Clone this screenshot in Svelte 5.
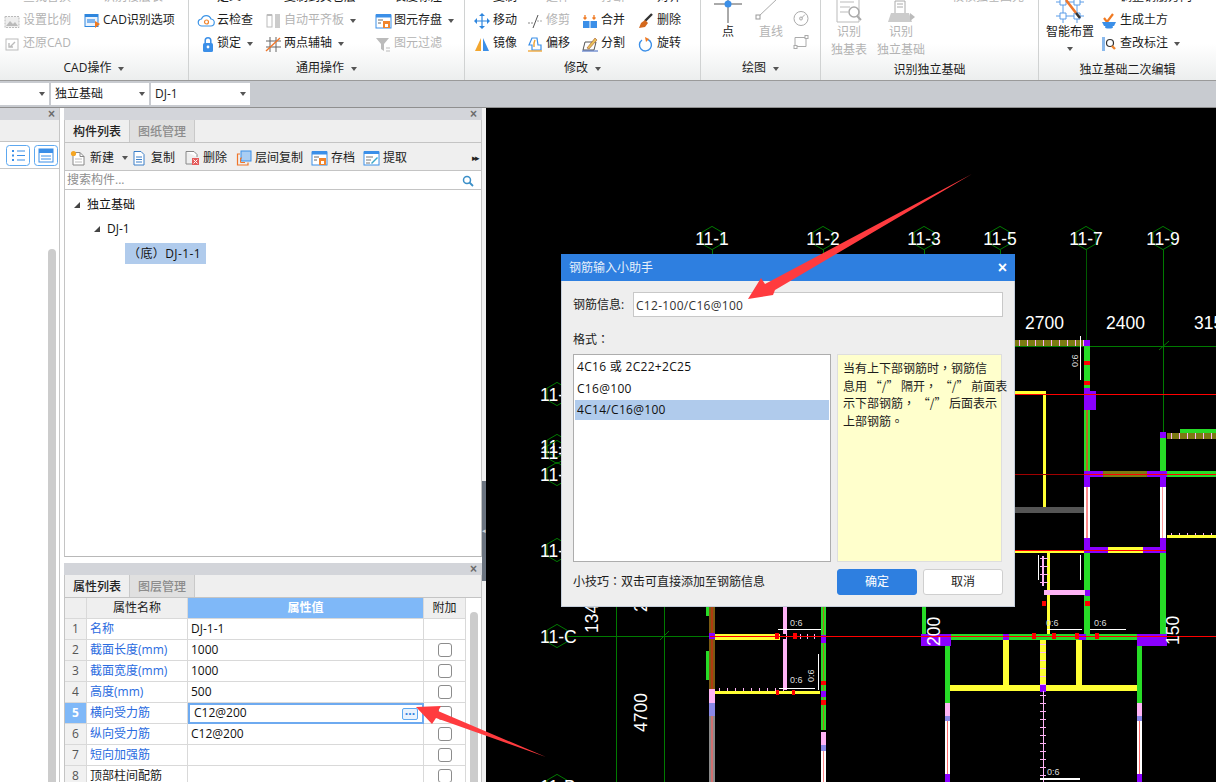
<script>
const icons = {
  scale: '<rect x="1" y="3.5" width="14" height="11" fill="#eee" stroke="#bbb" stroke-dasharray="2 1"/><path d="M2 13l4-5 3 3 2-2 3 4z" fill="#bbb"/>',
  cadopt: '<rect x="1" y="1.5" width="13" height="12" fill="#eaf3fd" stroke="#2e86de"/><rect x="1" y="1" width="13" height="3" fill="#2e86de"/><rect x="3" y="6" width="8" height="4" fill="#7db4ee"/><path d="M11 8l5 3-5 4z" fill="#f07a22"/>',
  restore: '<rect x="2" y="3" width="12" height="11" fill="none" stroke="#bbb"/><path d="M11 6L6 11M5 7v4h4" fill="none" stroke="#bbb" stroke-width="1.4"/>',
  cloud: '<path d="M4 13a3.5 3.5 0 0 1-.5-7A5 5 0 0 1 13 6a3.5 3.5 0 0 1-.5 7z" fill="#fff" stroke="#3b93e6" stroke-width="1.2"/><circle cx="8.5" cy="9" r="2" fill="none" stroke="#f0842c" stroke-width="1.2"/>',
  lock: '<rect x="5" y="7" width="10" height="9" rx="1.5" fill="#3b8fe8"/><path d="M7.200 7V4.500a2.800 2.800 0 0 1 5.600 0V7" fill="none" stroke="#3b8fe8" stroke-width="1.5"/><circle cx="10" cy="11" r="1.400" fill="#fff"/>',
  align: '<rect x="2" y="2" width="5" height="12" fill="none" stroke="#bbb"/><rect x="10" y="1" width="5" height="14" fill="#ccc"/><rect x="2" y="1" width="5" height="2" fill="#bbb"/>',
  axis: '<path d="M5 1v15M11 1v15M1 5h15M1 11h15" stroke="#666" fill="none"/><path d="M1 15L15 2" stroke="#f0762a" stroke-width="1.4"/>',
  save: '<rect x="1" y="2" width="15" height="13" fill="#fff" stroke="#3b8fe8"/><rect x="1" y="1" width="15" height="3.5" fill="#3b8fe8"/><path d="M3 7h5M3 10h3" stroke="#666"/><rect x="8" y="8" width="7" height="7" fill="#f0842c"/><rect x="10" y="11" width="3" height="3" fill="#fff"/>',
  filter: '<path d="M1 2h13L9 8v7l-3-2V8z" fill="#bbb"/><path d="M11 12h4M11 15h4" stroke="#bbb"/>',
  define: '<rect x="2" y="-4" width="12" height="10" fill="#fff" stroke="#888"/>',
  copylayer: '<rect x="2" y="-4" width="13" height="11" fill="#fff" stroke="#777"/>',
  len: '<path d="M8-4v10" stroke="#555"/>',
  rcopy: '<circle cx="8" cy="1" r="5" fill="none" stroke="#3b8fe8" stroke-width="1.5"/>',
  extend: '<path d="M2-3h12" stroke="#bbb"/><path d="M6 6L10-2" stroke="#bbb"/>',
  brk: '<rect x="1" y="-3" width="6" height="7" fill="#bbb"/><rect x="9" y="-3" width="6" height="7" fill="#bbb"/>',
  alignb: '<rect x="1" y="-4" width="14" height="9" fill="#5a9cec" stroke="#2e7fe0"/>',
  move: '<path d="M8 1v14M1 8h14" stroke="#2e86de" stroke-width="1.2"/><path d="M8 0l3 3H5zM8 16l3-3H5zM0 8l3-3v6zM16 8l-3-3v6z" fill="#2e86de"/>',
  trim: '<path d="M1 10h5" stroke="#888" stroke-dasharray="2 1"/><path d="M6 15L11 2" stroke="#555"/><path d="M10 8h5" stroke="#aaa" stroke-dasharray="2 1"/>',
  merge: '<rect x="1" y="8" width="14" height="7" fill="#3b8fe8"/><path d="M8 8v7" stroke="#fff"/><path d="M3 2v4M1.5 4.5L3 6l1.5-1.5M12 2v4M10.5 4.5L12 6l1.5-1.5" stroke="#f07a22" fill="none" stroke-width="1.3"/>',
  del: '<path d="M14 1L7 8" stroke="#333" stroke-width="2.4"/><path d="M7 7l3 3-3 4-6 1 2-5z" fill="#d4691e"/>',
  mirror: '<path d="M7 2v13H1z" fill="#f3a62e"/><path d="M9 2v13h6z" fill="#3b8fe8"/>',
  offset: '<path d="M5 14V9H2l3-7h5l1 7h3v5z" fill="none" stroke="#3b8fe8" stroke-width="1.2"/><path d="M7 11V7l1-3" fill="none" stroke="#f0a12c" stroke-width="1.4"/><path d="M1 15h14" stroke="#f0a12c" stroke-width="1.3"/>',
  split: '<path d="M1 14l2-8h11l-2 8z" fill="none" stroke="#555"/><path d="M5 12L13 2l2 2-8 9z" fill="#e8c25a" stroke="#a5562c" stroke-width=".6"/><path d="M0 15h16" stroke="#3b62c0"/>',
  rotate: '<path d="M10 3.5A6 6 0 1 1 4 4" fill="none" stroke="#3b8fe8" stroke-width="1.4"/><path d="M7 1l4 2-3 3z" fill="#f07a22"/>',
  adjust: '<path d="M2 3h12" stroke="#f07a22" stroke-width="1.5"/>',
  earth: '<path d="M3 5l3 4 6-8" fill="none" stroke="#f07a22" stroke-width="2.2"/><path d="M1 9h14l-2 4H3z" fill="#3b8fe8"/><ellipse cx="8" cy="14" rx="4" ry="1.5" fill="#3b8fe8"/>',
  mark: '<rect x="1" y="1" width="3" height="14" fill="#8ab9ec"/><circle cx="9" cy="7" r="3.5" fill="none" stroke="#333" stroke-width="1.2"/><path d="M11 10l3 3" stroke="#f0842c" stroke-width="2.4"/>',
  check: '<rect x="1" y="-4" width="12" height="9" fill="none" stroke="#ccc"/><path d="M4 1l3 3 6-6" stroke="#bbb" fill="none"/>',
  newdoc: '<path d="M3 2.5h7l4 4V15H3z" fill="#fff" stroke="#888"/><path d="M10 2.5V6.5h4" fill="none" stroke="#888"/><path d="M5 9h7M5 12h7" stroke="#bbb"/><circle cx="3.5" cy="3.5" r="2.6" fill="#f5a623"/>',
  copy: '<path d="M1 1.500h7l3 3V15H1z" fill="#fff" stroke="#3b7fc8"/><path d="M3 7h6M3 9.500h6M3 12h6" stroke="#3b7fc8"/>',
  remove: '<path d="M2 1.5h8l3 3V7" fill="#fff" stroke="#888"/><path d="M2 1.5V14h6" fill="none" stroke="#888"/><rect x="8" y="8" width="7" height="7" fill="#e55b5b"/><path d="M9.5 9.5l4 4M13.5 9.5l-4 4" stroke="#fff"/>',
  layercopy: '<rect x="5" y="1" width="10" height="10" fill="#a9cdf3" stroke="#3b8fe8"/><path d="M4 4H1.5v11H12v-2.5" fill="none" stroke="#f0762a" stroke-width="1.2"/><path d="M6 8H4.5v4.500H9" fill="none" stroke="#f0762a"/>',
  archive: '<rect x="1" y="2" width="15" height="13" fill="#fff" stroke="#3b8fe8"/><rect x="1" y="1" width="15" height="3.500" fill="#3b8fe8"/><path d="M3 7h5M3 10h3" stroke="#666"/><rect x="8" y="8" width="7" height="7" fill="#f0842c"/><rect x="10" y="11" width="3" height="3" fill="#fff"/>',
  extract: '<rect x="1" y="2" width="15" height="13" fill="#fff" stroke="#3b8fe8"/><rect x="1" y="1" width="15" height="3" fill="#3b8fe8"/><path d="M3 7h7M3 10h5M3 13h4" stroke="#777"/><path d="M8 13l6-6 1 1-6 6z" fill="#3ba7c8"/>'
};

const rib = [
  { cls: 'g1', name: 'CAD操作', drop: true, items: [
    { t: '查找替换', i: 'define', d: true }, { t: '设置比例', i: 'scale', d: true }, { t: '还原CAD', i: 'restore', d: true },
    { t: '识别楼层表', i: 'copylayer', d: true }, { t: 'CAD识别选项', i: 'cadopt' } ] },
  { cls: 'g2', name: '通用操作', drop: true, items: [
    { t: '定义', i: 'define' }, { t: '云检查', i: 'cloud' }, { t: '锁定', i: 'lock', p: true },
    { t: '复制到其它层', i: 'copylayer' }, { t: '自动平齐板', i: 'align', d: true, p: true }, { t: '两点辅轴', i: 'axis', p: true },
    { t: '长度标注', i: 'len' }, { t: '图元存盘', i: 'save', p: true }, { t: '图元过滤', i: 'filter', d: true } ] },
  { cls: 'g3', name: '修改', drop: true, items: [
    { t: '复制', i: 'rcopy' }, { t: '移动', i: 'move' }, { t: '镜像', i: 'mirror' },
    { t: '延伸', i: 'extend', d: true }, { t: '修剪', i: 'trim', d: true }, { t: '偏移', i: 'offset' },
    { t: '打断', i: 'brk', d: true }, { t: '合并', i: 'merge' }, { t: '分割', i: 'split' },
    { t: '对齐', i: 'alignb' }, { t: '删除', i: 'del' }, { t: '旋转', i: 'rotate' } ] }
];

const tools = [
  { t: '新建', i: 'newdoc', p: true, c: 'tnew' }, { t: '复制', i: 'copy', c: 'tcopy' }, { t: '删除', i: 'remove', c: 'tdel' },
  { t: '层间复制', i: 'layercopy', c: 'tlay' }, { t: '存档', i: 'archive', c: 'tarc' }, { t: '提取', i: 'extract', c: 'text' }
];

const rows = [
  { n: 1, k: '名称', v: 'DJ-1-1', nocheck: true }, { n: 2, k: '截面长度(mm)', v: '1000' },
  { n: 3, k: '截面宽度(mm)', v: '1000' }, { n: 4, k: '高度(mm)', v: '500' },
  { n: 5, k: '横向受力筋', v: 'C12@200', sel: true }, { n: 6, k: '纵向受力筋', v: 'C12@200' },
  { n: 7, k: '短向加强筋', v: '' }, { n: 8, k: '顶部柱间配筋', v: '', plain: true }
];

const G = '#27dc27', P = '#8a00ff', Y = '#ffff33', R = '#ff0000', O = '#7b7a12', K = '#ffb4f6', B = '#8a88e6', W = '#ffffff', L = '#007a00';
const rect = [];
const add = (x, y, w, h, c) => rect.push({ x, y, w, h, c });
const tickH = (a, b, y, h, s, c) => { for (let x = a; x < b; x += s) add(x, y, 1, h, c); };
const tickV = (a, b, x, w, s, c) => { for (let y = a; y < b; y += s) add(x, y, w, 1, c); };

// axis lines
[712, 823, 924, 1000].forEach((x) => add(x, 250, 1, 6, L));
add(1086, 250, 1, 100, '#005a00'); add(1163, 250, 1, 184, L);
add(1015, 346, 201, 1, L); add(616, 600, 1, 182, L); add(664, 600, 1, 182, L);
add(568, 636, 142, 1, L);
// right block
add(1015, 340, 69, 6, O); tickH(1019, 1084, 340, 6, 8, K); add(1084, 340, 6, 6, P);
add(1084, 346, 6, 45, G); add(1084, 361, 6, 4, R); add(1084, 381, 6, 4, R);
add(1080, 336, 1, 44, W);
add(1015, 391, 29, 3, Y); add(1043, 391, 3, 116, Y);
add(1084, 388, 6, 83, G); add(1086, 410, 2, 61, '#b86a20');
add(1084, 388, 6, 6, P); add(1084, 391, 12, 19, P);
add(1015, 507, 69, 6, '#555555');
add(1160, 438, 6, 33, G); add(1160, 432, 6, 6, P);
add(1180, 429, 36, 4, G); add(1167, 433, 49, 6, O); tickH(1171, 1216, 433, 6, 8, K);
add(1084, 471, 83, 6, P); add(1103, 471, 44, 6, O);
add(1167, 471, 49, 6, G);
add(1084, 477, 6, 10, P); add(1160, 477, 6, 10, P);
add(1084, 487, 6, 51, W); add(1086, 487, 2, 51, '#ff8a8a'); add(1160, 487, 6, 51, W); add(1162, 487, 1, 51, '#ff9a9a');
add(1084, 538, 6, 9, P); add(1160, 538, 6, 9, P);
add(1084, 547, 82, 6, P); add(1108, 547, 35, 6, Y);
add(1015, 550, 69, 3, Y);
add(1167, 535, 49, 3, Y); tickH(1171, 1216, 533, 2, 8, K);
add(1084, 553, 6, 82, G); add(1160, 553, 6, 82, G);
add(1047, 553, 3, 82, Y); add(1038, 555, 1, 25, W); add(1080, 555, 1, 25, W); add(1042, 556, 2, 30, K);
tickV(558, 590, 1040, 8, 8, K);
add(1044, 590, 41, 5, K); add(1085, 590, 5, 6, P);
add(1042, 601, 4, 5, R); add(1085, 601, 5, 5, R);
// lower left
add(709, 600, 6, 89, '#7a5a12'); add(711, 600, 2, 89, '#b03a10'); add(706, 600, 3, 16, G); add(706, 651, 3, 29, G); add(709, 633, 6, 6, P);
add(709, 689, 6, 14, K); add(709, 703, 6, 13, B); add(709, 716, 6, 66, '#8a8a8a'); add(711, 716, 2, 66, '#d07070');
add(715, 634, 65, 6, Y); add(715, 636, 65, 1, W);
add(783, 600, 4, 90, K);
add(780, 634, 41, 5, '#000000'); tickH(786, 820, 634, 5, 7, K);
add(775, 633, 4, 6, R); add(793, 633, 4, 6, R);
add(778, 629, 44, 1, W);
add(821, 600, 5, 130, G); add(823, 600, 1, 130, '#b06a20'); add(821, 635, 5, 8, P);
add(821, 681, 5, 4, R); add(821, 700, 5, 5, R); add(821, 691, 5, 6, P);
add(821, 732, 5, 13, K); add(821, 745, 5, 6, B); add(821, 751, 5, 31, W); add(823, 751, 1, 31, '#ff8a8a');
add(715, 691, 105, 3, Y); tickH(719, 790, 688, 3, 8, K);
add(776, 690, 3, 5, R); add(792, 690, 3, 5, R);
add(779, 688, 36, 1, W); add(818, 654, 1, 36, W);
// lower right
add(922, 600, 4, 34, G); add(921, 634, 30, 12, P);
add(951, 634, 186, 6, G);
add(1003, 634, 6, 6, P); add(1079, 634, 7, 6, P);
[1032, 1052, 1075, 1095].forEach((x) => add(x, 633, 4, 6, R));
add(1137, 634, 30, 12, P);
add(945, 646, 5, 57, G); add(1137, 646, 5, 57, G);
add(945, 703, 5, 13, K); add(945, 716, 5, 5, B); add(945, 721, 5, 53, W); add(947, 721, 1, 53, '#ff6a6a'); add(945, 774, 5, 8, P);
add(1137, 703, 5, 13, K); add(1137, 716, 5, 5, B); add(1137, 721, 5, 53, W); add(1139, 721, 1, 53, '#ff6a6a'); add(1137, 774, 5, 8, P);
add(1160, 600, 6, 34, G);
add(1003, 640, 6, 46, Y); add(1040, 640, 6, 46, Y); add(1076, 640, 6, 46, Y);
tickV(644, 686, 1040, 6, 8, K);
add(950, 685, 187, 6, Y); add(1040, 685, 6, 7, P);
add(1043, 691, 1, 91, K); tickV(695, 782, 1040, 6, 8, K);
add(1040, 778, 40, 2, W); add(1047, 629, 35, 1, W); add(1090, 629, 36, 1, W);
// red axes
add(710, 636, 506, 1, R); add(1015, 394, 201, 1, R); add(1015, 474, 69, 1, '#a00000'); add(1084, 474, 132, 1, R); add(1015, 550, 151, 1, R);

const hexTop = [['11-1', 712], ['11-2', 823], ['11-3', 924], ['11-5', 1000], ['11-7', 1086], ['11-9', 1163]];
const hexLeft = [['11-H', 394], ['11-G', 446], ['11-F', 452], ['11-E', 474], ['11-D', 550], ['11-C', 636], ['11-B', 786]];
const hexPts = (cx, cy) => [0, 60, 120, 180, 240, 300].map((a) => {
  const r = (a * Math.PI) / 180;
  return `${(cx + 11.6 * Math.sin(r)).toFixed(1)},${(cy - 11.6 * Math.cos(r)).toFixed(1)}`;
}).join(' ');
const small = [[790, 626], [1046, 626], [1094, 626], [790, 683], [1047, 775]];
const smallRot = [[1078, 367], [814, 682]];
const noteLines = ['当有上下部钢筋时，钢筋信', '息用 “/” 隔开， “/” 前面表', '示下部钢筋， “/” 后面表示', '上部钢筋。'];
</script>

<div class="app">
  <header class="ribbon">
    {#each rib as g}
      <section class="group {g.cls}">
        <div class="grid">
          {#each g.items as it}
            <div class="item" class:dis={it.d}>
              <svg class="ic" viewBox="0 0 16 16">{@html icons[it.i]}</svg>
              <span>{it.t}</span>
              {#if it.p}<i class="caret"></i>{/if}
            </div>
          {/each}
        </div>
        <div class="glabel">{g.name}{#if g.drop}<i class="caret wide"></i>{/if}</div>
      </section>
    {/each}

    <section class="group g4">
      <div class="body">
        <div class="big pt">
          <svg class="bi" viewBox="0 0 32 37"><path d="M2 18h28M16 0v37" stroke="#555" /><circle cx="16" cy="18" r="3.500" fill="#3b8fe8" /></svg>
          <span>点</span>
        </div>
        <div class="big ln dis">
          <svg class="bi" viewBox="0 0 32 37"><path d="M3 31L23 12" stroke="#aaa" /><rect x="1" y="29" width="4" height="4" fill="#fff" stroke="#999" /></svg>
          <span>直线</span>
        </div>
        <div class="shapes">
          <svg class="ic" viewBox="0 0 16 16"><rect x="6" y="-2" width="3" height="6" fill="#fff" stroke="#aaa" /></svg>
          <svg class="ic" viewBox="0 0 16 16"><circle cx="8" cy="8" r="7" fill="none" stroke="#aaa" /><circle cx="8" cy="8" r="1.500" fill="none" stroke="#aaa" /><path d="M8 8l4-4" stroke="#aaa" /></svg>
          <svg class="ic" viewBox="0 0 16 16"><path d="M2 4h11M2 4v9h11V4" fill="none" stroke="#aaa" /><rect x="12" y="2" width="3" height="3" fill="#fff" stroke="#aaa" /><rect x="1" y="12" width="3" height="3" fill="#fff" stroke="#aaa" /></svg>
        </div>
      </div>
      <div class="glabel">绘图<i class="caret wide"></i></div>
    </section>

    <section class="group g5">
      <div class="body">
        <div class="big tb dis">
          <svg class="bi" viewBox="0 0 32 37"><path d="M4 10h22v26H4z" fill="#fff" stroke="#bbb" /><path d="M7 16h14M7 21h10M7 26h8" stroke="#bbb" /><circle cx="21" cy="26" r="5" fill="none" stroke="#aaa" stroke-width="1.500" /><path d="M24 30l4 4" stroke="#aaa" stroke-width="2" /></svg>
          <span>识别</span><span>独基表</span>
        </div>
        <div class="big fd dis">
          <svg class="bi" viewBox="0 0 32 37"><path d="M3 36l3-9h18l3 9z" fill="#ccc" /><path d="M10 27V15h10v12" fill="#fff" stroke="#aaa" /><path d="M12 18h6M12 21h6" stroke="#aaa" /><path d="M25 27l5 4-5 4z" fill="#bbb" /></svg>
          <span>识别</span><span>独立基础</span>
        </div>
        <div class="item dis chk">
          <svg class="ic" viewBox="0 0 16 16">{@html icons.check}</svg><span>校核独基图元</span>
        </div>
      </div>
      <div class="glabel low">识别独立基础</div>
    </section>

    <section class="group g6">
      <div class="body">
        <div class="big sm">
          <svg class="bi" viewBox="0 0 32 37"><path d="M2 16h28M2 30h28M9 6v31M23 6v31" stroke="#5a9ce8" /><path d="M6 13h6v6H6zM20 13h6v6h-6zM6 27h6v6H6zM20 27h6v6h-6z" fill="#fff" stroke="#5a9ce8" /><path d="M12 14l10 13" stroke="#f0762a" stroke-width="2.600" /><path d="M22 27l4 5" stroke="#333" stroke-width="2.600" /></svg>
          <span>智能布置</span>
          <i class="caret solo"></i>
        </div>
        <div class="col">
          <div class="item"><svg class="ic" viewBox="0 0 16 16">{@html icons.adjust}</svg><span>调整钢筋方向</span></div>
          <div class="item"><svg class="ic" viewBox="0 0 16 16">{@html icons.earth}</svg><span>生成土方</span></div>
          <div class="item"><svg class="ic" viewBox="0 0 16 16">{@html icons.mark}</svg><span>查改标注</span><i class="caret"></i></div>
        </div>
      </div>
      <div class="glabel low">独立基础二次编辑</div>
    </section>
  </header>

  <nav class="combos">
    <div class="combo c1"><i class="caret"></i></div>
    <div class="combo c2"><span>独立基础</span><i class="caret"></i></div>
    <div class="combo c3"><span>DJ-1</span><i class="caret"></i></div>
  </nav>

  <main class="main">
    <aside class="side">
      <div class="phead"><b class="x">×</b></div>
      <div class="sidetabs"></div>
      <div class="sidetools">
        <svg class="sb" viewBox="0 0 24 21"><rect x=".5" y=".5" width="23" height="20" rx="3" fill="#fff" stroke="#5da8f0" /><path d="M6 6h2M6 10.500h2M6 15h2" stroke="#3b8fe8" stroke-width="2" /><path d="M11 6h8M11 10.500h8M11 15h8" stroke="#3b8fe8" /></svg>
        <svg class="sb" viewBox="0 0 24 21"><rect x=".5" y=".5" width="23" height="20" rx="3" fill="#fff" stroke="#5da8f0" /><rect x="5" y="4" width="14" height="13" fill="#fff" stroke="#3b8fe8" /><rect x="5" y="4" width="14" height="4" fill="#3b8fe8" /><path d="M7 11h10M7 14h10" stroke="#3b8fe8" /></svg>
      </div>
      <div class="sidebody"><div class="thumb"></div></div>
    </aside>
    <div class="mid">
      <section class="panel top">
        <div class="phead"><b class="x">×</b></div>
        <div class="tabs"><span class="tab on">构件列表</span><span class="tab">图纸管理</span></div>
        <div class="toolbar">
          {#each tools as t}
            <div class="tool {t.c}">
              <svg class="ic" viewBox="0 0 16 16">{@html icons[t.i]}</svg>
              <span>{t.t}</span>
              {#if t.p}<i class="caret"></i>{/if}
            </div>
          {/each}
          <span class="more">▸▸</span>
        </div>
        <div class="search">
          <span>搜索构件...</span>
          <svg class="mag" viewBox="0 0 12 12"><circle cx="5" cy="5" r="3.500" fill="none" stroke="#3b8fc8" stroke-width="1.500" /><path d="M7.500 7.500L11 11" stroke="#3b8fc8" stroke-width="1.800" /></svg>
        </div>
        <div class="tree">
          <div class="node n0"><i class="tri"></i><span>独立基础</span></div>
          <div class="node n1"><i class="tri"></i><span>DJ-1</span></div>
          <div class="node n2"><span class="hl tc">（底）DJ-1-1</span></div>
        </div>
      </section>
      <div class="hgap"></div>
      <section class="panel bottom">
        <div class="phead"><b class="x">×</b></div>
        <div class="tabs"><span class="tab on">属性列表</span><span class="tab">图层管理</span></div>
        <div class="tablewrap">
          <div class="table">
            <div class="th"></div><div class="th">属性名称</div><div class="th val">属性值</div><div class="th">附加</div>
            {#each rows as r}
              <div class="num" class:cur={r.sel}>{r.n}</div>
              <div class="key" class:plain={r.plain}>{r.k}</div>
              <div class="value" class:edit={r.sel}>
                <span>{r.v}</span>
                {#if r.sel}<span class="dots">···</span>{/if}
              </div>
              <div class="extra">{#if !r.nocheck}<i class="cb"></i>{/if}</div>
            {/each}
          </div>
          <div class="vbar"><div class="vthumb"></div></div>
        </div>
      </section>
    </div>
    <div class="split"><div class="splitgap"></div><div class="handle">◂</div></div>
    <div class="canvas">
      <svg class="cad" viewBox="486 108 730 674" shape-rendering="crispEdges">
        {#each rect as r}
          <rect x={r.x} y={r.y} width={r.w} height={r.h} fill={r.c} />
        {/each}
        <g shape-rendering="auto">
          <path d="M1159 350l10-9M660 640l9-9" stroke={L} fill="none" />
          {#each hexTop as [t, x]}
            <polygon points={hexPts(x, 238)} fill="none" stroke="#007a00" />
            <text class="lbl" x={x} y="245" text-anchor="middle">{t}</text>
          {/each}
          {#each hexLeft as [t, y]}
            <polygon points={hexPts(557, y)} fill="none" stroke="#007a00" />
            <text class="lbl" x="540" y={y + 7}>{t}</text>
          {/each}
          <text class="lbl" x="1025" y="329">2700</text>
          <text class="lbl" x="1106" y="329">2400</text>
          <text class="lbl" x="1194" y="329">3150</text>
          <text class="lbl" transform="rotate(-90 598 633)" x="598" y="633">1340</text>
          <text class="lbl" transform="rotate(-90 647 612)" x="647" y="612">2400</text>
          <text class="lbl" transform="rotate(-90 647 732)" x="647" y="732">4700</text>
          <text class="lbl" transform="rotate(-90 940 646)" x="940" y="646">200</text>
          <text class="lbl" transform="rotate(-90 1179 645)" x="1179" y="645">150</text>
          {#each small as [x, y]}
            <text class="tiny" x={x} y={y}>0:6</text>
          {/each}
          {#each smallRot as [x, y]}
            <text class="tiny" transform="rotate(-90 {x} {y})" x={x} y={y}>0:6</text>
          {/each}
        </g>
      </svg>
    </div>
  </main>

  <div class="dialog">
    <div class="dtitle"><span>钢筋输入小助手</span><span class="dx">×</span></div>
    <div class="dbody">
      <div class="inrow"><span class="inlabel">钢筋信息:</span><div class="input lat">C12-100/C16@100</div></div>
      <div class="fmt tc">格式：</div>
      <div class="panes">
        <div class="list lat">
          <div class="li">4C16 或 2C22+2C25</div>
          <div class="li">C16@100</div>
          <div class="li sel">4C14/C16@100</div>
        </div>
        <div class="note">
          {#each noteLines as l}<div>{l}</div>{/each}
        </div>
      </div>
      <div class="foot">
        <span class="tc">小技巧：双击可直接添加至钢筋信息</span>
        <div class="btns"><span class="btn ok">确定</span><span class="btn">取消</span></div>
      </div>
    </div>
  </div>

  <svg class="arrows" viewBox="0 0 1216 782">
    <polygon points="972,174 775,290 773,295 748,299 761,278 765,284" fill="#ff3b3f" />
    <polygon points="416,707 441,706 438,711 546,757 436,718 432,724" fill="#ff3b3f" />
  </svg>
</div>

<style>
  :global(body) { margin: 0; background: #fff; }
  .app {
    position: relative; width: 1216px; height: 782px; overflow: hidden;
    display: flex; flex-direction: column;
    font: 12px/1.2 "Open Sans", "Noto Sans CJK SC", sans-serif; color: #1c1c1c;
  }
  .tc { font-family: "Open Sans", "Noto Sans CJK TC", sans-serif; }
  .ribbon {
    height: 80px; flex: none; display: flex; overflow: hidden;
    background: linear-gradient(#fff 55%, #eceeee);
    border-bottom: 1px solid #9a9a9a; box-sizing: content-box;
  }
  .group { height: 80px; display: flex; flex-direction: column; justify-content: flex-end; border-right: 1px solid #d0d2d2; box-sizing: border-box; flex: none; }
  .g1 { width: 189px; } .g2 { width: 276px; } .g3 { width: 236px; } .g4 { width: 120px; } .g5 { width: 218px; } .g6 { width: 177px; border-right: 0; }
  .grid { display: grid; flex: none; grid-auto-flow: column; grid-template-rows: repeat(3, 23px); }
  .g1 .grid { padding-left: 4px; grid-template-columns: 80px auto; }
  .g2 .grid { padding-left: 9px; grid-template-columns: 67px 110px auto; }
  .g3 .grid { padding-left: 9px; grid-template-columns: 53px 55px 56px auto; }
  .item { display: flex; align-items: center; gap: 3px; white-space: nowrap; height: 23px; }
  .dis { color: #b3b3b3; }
  .ic { width: 16px; height: 16px; flex: none; overflow: visible; }
  .caret { display: inline-block; width: 0; height: 0; border: 3.5px solid transparent; border-top: 4px solid #555; border-bottom: 0; margin-left: 3px; vertical-align: middle; }
  .caret.wide { margin-left: 7px; }
  .glabel { flex: none; height: 25px; line-height: 25px; text-align: center; white-space: nowrap; }
  .glabel.low { line-height: 29px; }
  .body { display: flex; flex: none; height: 69px; }
  .big { position: relative; display: flex; flex-direction: column; align-items: center; flex: none; line-height: 17.5px; white-space: nowrap; }
  .bi { width: 32px; height: 37px; flex: none; overflow: visible; }
  .pt { width: 50px; margin-left: 2px; } .ln { width: 36px; }
  .shapes { display: flex; flex-direction: column; margin: -2px 0 0 4px; height: 69px; }
  .shapes .ic { height: 23px; width: 16px; }
  .tb { width: 56px; } .fd { width: 60px; margin-left: -6px; }
  .chk { margin: 0 0 0 2px; height: 23px; }
  .sm { width: 60px; margin-left: 1px; }
  .caret.solo { margin: 6px 0 0; }
  .col { margin-left: 1px; display: flex; flex-direction: column; }
  .combos { height: 27px; flex: none; background: #c8cbd0; border-bottom: 1px solid #8f8f8f; display: flex; gap: 2px; padding-top: 2px; box-sizing: border-box; }
  .combo { height: 22px; background: #fff; display: flex; align-items: center; justify-content: space-between; padding: 0 4px; box-sizing: border-box; }
  .combo .caret { margin-left: auto; }
  .c1 { width: 49px; } .c2 { width: 98px; } .c3 { width: 99px; }
  .main { flex: 1; display: flex; min-height: 0; }
  .side { width: 60px; flex: none; margin-right: 4px; background: #fff; border-right: 1px solid #c6c6c6; box-sizing: border-box; display: flex; flex-direction: column; }
  .phead { height: 12px; flex: none; background: #d3d5da; display: flex; justify-content: flex-end; align-items: center; padding-right: 4px; }
  .x { font: bold 12px/12px "Liberation Sans", sans-serif; color: #6b6b6b; }
  .sidetabs { height: 21px; flex: none; background: #efefef; border-bottom: 1px solid #c4c4c4; }
  .sidetools { height: 26px; flex: none; display: flex; align-items: center; gap: 4px; padding-left: 6px; background: #fff; border-bottom: 1px solid #c8c8c8; }
  .sb { width: 24px; height: 21px; flex: none; }
  .sidebody { flex: 1; padding: 80px 0 0 48px; }
  .thumb { width: 8px; height: 100%; background: #cccccc; border-radius: 4px 4px 0 0; }
  .mid { width: 418px; flex: none; display: flex; flex-direction: column; }
  .panel { border-left: 1px solid #c4c4c4; border-right: 1px solid #c4c4c4; box-sizing: border-box; display: flex; flex-direction: column; }
  .panel.top { height: 449px; border-bottom: 1px solid #b8b8b8; }
  .panel.bottom { flex: 1; min-height: 0; }
  .hgap { height: 6px; flex: none; background: #fff; }
  .panel .phead { margin-left: -1px; margin-right: -1px; padding-right: 5px; }
  .tabs { height: 22px; flex: none; display: flex; background: #efefef; border-bottom: 1px solid #c4c4c4; }
  .tab { width: 64px; height: 22px; text-align: center; line-height: 23px; background: #e0e0e0; color: #8c8c8c; border-right: 1px solid #c9c9c9; font-weight: 500; }
  .tab.on { background: #efefef; color: #222; }
  .toolbar { height: 28px; flex: none; display: flex; align-items: center; background: #efefef; border-bottom: 1px solid #c4c4c4; box-sizing: border-box; padding-top: 3px; }
  .tool { display: flex; align-items: center; flex: none; gap: 4px; }
  .tnew { margin-left: 5px; width: 63px; } .tcopy { width: 51px; gap: 2px; } .tdel { width: 52px; gap: 3px; } .tlay { width: 75px; gap: 3px; } .tarc { width: 52px; } .text { width: 50px; }
  .tool .caret { margin-left: 4px; }
  .more { margin-left: auto; margin-right: 3px; font-size: 9px; color: #222; letter-spacing: -2px; }
  .search { height: 19px; flex: none; display: flex; align-items: center; justify-content: space-between; padding: 1px 7px 0 2px; border-bottom: 1px solid #c4c4c4; color: #8e8e8e; background: #fff; box-sizing: border-box; }
  .mag { width: 12px; height: 12px; flex: none; }
  .tree { flex: 1; background: #fff; padding-top: 3px; color: #111; }
  .node { height: 24px; display: flex; align-items: center; }
  .tri { width: 0; height: 0; border-bottom: 6px solid #444; border-left: 6px solid transparent; flex: none; margin-right: 7px; }
  .n0 { padding-left: 9px; } .n1 { padding-left: 29px; } .n2 { padding-left: 60px; }
  .hl { background: #b0cbec; height: 21px; line-height: 21px; padding: 0 4px 0 3px; width: 74px; display: block; white-space: nowrap; letter-spacing: .4px; }
  .tablewrap { flex: 1; display: flex; min-height: 0; overflow: hidden; background: #fff; }
  .table { display: grid; grid-template-columns: 22px 101px 236px 42px; grid-auto-rows: 21px; align-content: start; }
  .table > div { box-sizing: border-box; border-right: 1px solid #d9d9d9; border-bottom: 1px solid #d9d9d9; display: flex; align-items: center; }
  .table .th { background: #efefef; justify-content: center; padding-top: 1px; }
  .table .th.val { background: #7fb8f8; color: #fff; font-weight: 700; }
  .table .num { background: #f1f1f1; justify-content: center; color: #555; }
  .table .num.cur { background: #7fb8f8; color: #fff; font-weight: 700; }
  .table .key { color: #2a6be0; padding-left: 3px; }
  .table .key.plain { color: #1c1c1c; }
  .table .value { padding-left: 3px; color: #111; }
  .table .value.edit { border: 2px solid #6eaaf0; padding-left: 4px; justify-content: space-between; padding-right: 4px; }
  .dots { width: 16px; height: 12px; line-height: 10px; text-align: center; border: 1px solid #5da8f0; border-radius: 2px; background: #e8f2fd; color: #2e7fe0; font-weight: 700; box-sizing: border-box; }
  .table .extra { justify-content: center; }
  .cb { width: 14px; height: 14px; box-sizing: border-box; border: 1px solid #8c8c8c; border-radius: 3px; background: #fff; }
  .vbar { flex: 1; padding: 14px 3px 0 4px; }
  .vthumb { width: 8px; height: 100%; background: #cccccc; border-radius: 4px 4px 0 0; }
  .split { width: 4px; flex: none; background: #f0f0f0; display: flex; flex-direction: column; }
  .splitgap { height: 373px; flex: none; }
  .handle { height: 100px; flex: none; background: #6b7480; color: #d0d4d8; font-size: 7px; line-height: 100px; overflow: hidden; text-align: center; }
  .canvas { flex: 1; background: #000; min-width: 0; }
  .cad { display: block; width: 730px; height: 674px; }
  .lbl { font: 17.500px "Liberation Sans", sans-serif; fill: #fff; }
  .tiny { font: 9px "Liberation Sans", sans-serif; fill: #ddd; }
  .dialog { position: absolute; left: 561px; top: 254px; width: 454px; height: 353px; background: #eeeeee; border: 1px solid #c6cfdb; box-sizing: border-box; display: flex; flex-direction: column; }
  .dtitle { height: 27px; flex: none; background: #2e7fe0; color: #e6f0fb; display: flex; align-items: center; justify-content: space-between; padding: 1px 8px 0; margin: -1px -1px 0; box-sizing: border-box; }
  .dx { font: bold 16px "Liberation Sans", sans-serif; color: #fff; }
  .dbody { flex: 1; padding: 11px 11px 0; display: flex; flex-direction: column; }
  .inrow { display: flex; align-items: center; height: 25px; justify-content: space-between; }
  .inlabel { padding-top: 2px; }
  .input { width: 370px; height: 25px; box-sizing: border-box; background: #fff; border: 1px solid #c8c8c8; padding-left: 2px; line-height: 25px; color: #333; }
  .lat { letter-spacing: .3px; }
  .fmt { margin-top: 15px; height: 16px; line-height: 16px; }
  .panes { display: flex; margin-top: 6px; gap: 6px; height: 208px; }
  .list { width: 258px; box-sizing: border-box; border: 1px solid #adadad; background: #fff; padding: 1px; color: #111; }
  .li { height: 22px; line-height: 22px; padding-left: 2px; }
  .li.sel { height: 20px; line-height: 20px; background: #b0cbec; }
  .note { width: 165px; box-sizing: border-box; border: 1px solid #dedede; background: #ffffcc; padding: 4px 5px; line-height: 17.600px; white-space: nowrap; font-family: "Noto Sans CJK TC", sans-serif; }
  .foot { display: flex; align-items: center; justify-content: space-between; margin-top: 7px; height: 26px; }
  .btns { display: flex; gap: 6px; }
  .btn { width: 80px; height: 26px; line-height: 24px; text-align: center; box-sizing: border-box; background: #fff; border: 1px solid #cfcfcf; border-radius: 3px; }
  .btn.ok { background: #2e7fe0; border-color: #2e7fe0; color: #fff; }
  .arrows { position: absolute; left: 0; top: 0; width: 1216px; height: 782px; pointer-events: none; }
</style>
